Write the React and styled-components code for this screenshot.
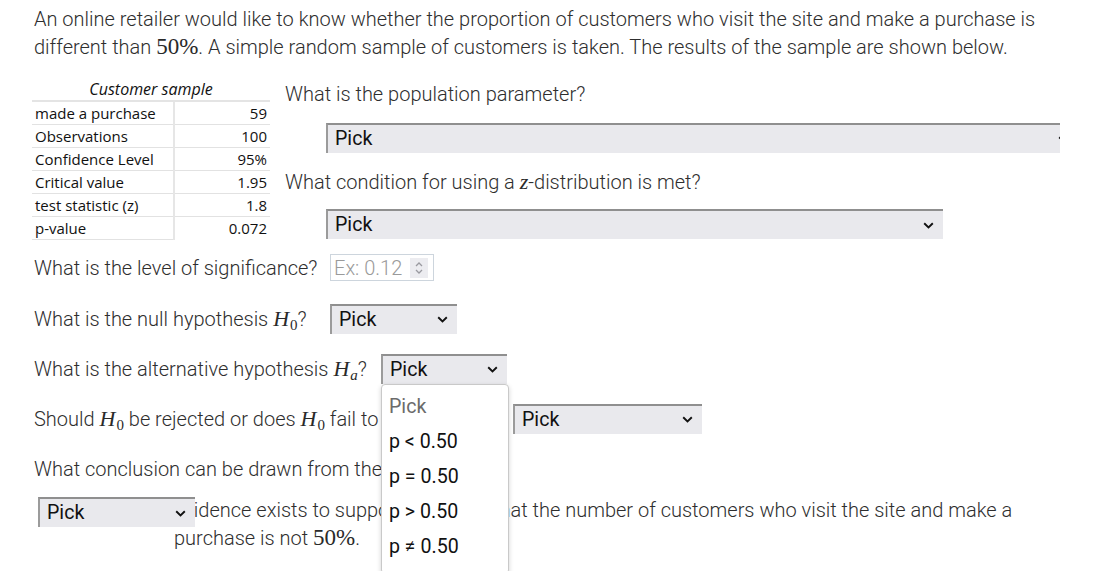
import React from "react";
import styled, { createGlobalStyle } from "styled-components";

const GlobalStyle = createGlobalStyle`
  html, body { margin: 0; padding: 0; background: #fff; }
  body {
    font-family: Roboto, "Noto Sans", sans-serif;
    font-size: 20px;
    font-weight: 300;
    color: #2e2e2e;
  }
`;

const Page = styled.div`
  position: relative;
  box-sizing: border-box;
  width: 1100px;
  height: 571px;
  overflow: hidden;
  padding: 5px 0 0 34px;
`;

const Intro = styled.p`
  margin: 0;
  max-width: 1040px;
  line-height: 28px;
`;

const MathText = styled.span`
  font-family: "Liberation Serif", "DejaVu Serif", serif;
  font-size: ${(p) => (p.$italic ? 22 : 23)}px;
  font-weight: 400;
  font-style: ${(p) => (p.$italic ? "italic" : "normal")};
  color: #2a2a2a;
`;

const Sub = styled.sub`
  font-size: 15px;
  font-style: ${(p) => (p.$italic ? "italic" : "normal")};
  vertical-align: -4px;
  line-height: 0;
  margin-left: 1px;
`;

const TopSection = styled.div`
  display: flex;
  align-items: flex-start;
  margin-top: 17px;
`;

const SampleTable = styled.table`
  border-collapse: collapse;
  width: 238px;
  margin-left: -2px;
  font-family: "Open Sans", "Noto Sans", sans-serif;
  font-size: 15px;
  font-weight: 400;
  color: #111;
  flex-shrink: 0;
`;

const HeadCell = styled.th`
  font-style: italic;
  font-size: 16px;
  font-weight: 400;
  text-align: center;
  height: 21px;
  padding: 0;
  border-bottom: 2px solid #e4e4e4;
`;

const LabelCell = styled.td`
  height: 22px;
  padding: 0 0 0 3px;
  width: 138px;
  border-bottom: 1px solid #e2e2e2;
  border-right: 2px solid #e6e6e6;
  white-space: nowrap;
`;

const ValueCell = styled.td`
  height: 22px;
  padding: 0 3px 0 0;
  text-align: right;
  border-bottom: ${(p) => (p.$last ? "none" : "1px solid #e2e2e2")};
`;

const RightCol = styled.div`
  margin-left: 15px;
  padding-top: 2px;
  display: flex;
  flex-direction: column;
  align-items: flex-start;
`;

const Question = styled.div`
  line-height: 28px;
  margin-top: ${(p) => p.$mt || 0}px;
  white-space: nowrap;
`;

const Clip = styled.div`
  width: ${(p) => p.$w}px;
  overflow: hidden;
  margin-top: ${(p) => p.$mt || 0}px;
  margin-left: ${(p) => p.$ml || 0}px;
`;

const SelectBox = styled.div`
  position: relative;
  box-sizing: border-box;
  width: ${(p) => p.$w}px;
  height: ${(p) => p.$h || 30}px;
  flex-shrink: 0;
  display: flex;
  align-items: center;
  justify-content: space-between;
  padding: 0 9px 0 7px;
  background: #e9e9ed;
  border-top: 2px solid #8f8f8f;
  border-left: 2px solid #9b9b9b;
  color: #111;
  font-size: 19.6px;
  font-weight: 400;
  line-height: 1;
  z-index: 1;
  margin-top: ${(p) => p.$mt || 0}px;
  margin-left: ${(p) => p.$ml || 0}px;
`;

const Chevron = () => (
  <svg width="11" height="7" viewBox="0 0 11 7" aria-hidden="true">
    <path d="M1.2 1.2 L5.5 5.4 L9.8 1.2" fill="none" stroke="#111" strokeWidth="1.9" />
  </svg>
);

const Select = ({ w, h, mt, ml, children }) => (
  <SelectBox $w={w} $h={h} $mt={mt} $ml={ml}>
    <span>Pick</span>
    <Chevron />
    {children}
  </SelectBox>
);

const Bottom = styled.div`
  display: flex;
  flex-direction: column;
  margin-top: 12px;
`;

const QRow = styled.div`
  display: flex;
  align-items: center;
  height: 31px;
  margin-bottom: ${(p) => p.$mb ?? 19}px;
  margin-top: ${(p) => p.$mt || 0}px;
  white-space: nowrap;
`;

const Label = styled.span`
  display: inline-block;
  width: ${(p) => p.$w}px;
  flex-shrink: 0;
  line-height: 28px;
`;

const NumberBox = styled.div`
  box-sizing: border-box;
  width: 104px;
  height: 27px;
  display: flex;
  align-items: center;
  padding: 0 5px 0 3px;
  border: 1px solid #cdd5dd;
  background: #fff;
`;

const NumberInput = styled.input`
  width: 72px;
  border: none;
  outline: none;
  padding: 0;
  font-family: Roboto, sans-serif;
  font-size: 20px;
  font-weight: 300;
  color: #333;
  background: transparent;
  &::placeholder { color: #9a9a9a; }
`;

const Spinner = styled.span`
  margin-left: auto;
  width: 18px;
  height: 20px;
  background: #ececf0;
  display: flex;
  align-items: center;
  justify-content: center;
`;

const Menu = styled.div`
  position: absolute;
  top: 100%;
  left: -2px;
  box-sizing: border-box;
  width: 128px;
  height: 190px;
  padding-top: 4px;
  background: #fff;
  border: 1px solid #c9c9c9;
  border-radius: 4px;
  box-shadow: 0 2px 5px rgba(0, 0, 0, 0.18);
  z-index: 20;
`;

const MenuItem = styled.div`
  height: 35px;
  line-height: 35px;
  padding-left: 7px;
  font-size: 19.6px;
  font-weight: 400;
  color: ${(p) => (p.$muted ? "#6b6b6b" : "#111")};
`;

const Conclusion = styled.div`
  line-height: 28px;
  margin-bottom: 14px;
  white-space: nowrap;
`;

const ConclusionRow = styled.div`
  display: flex;
  align-items: flex-start;
  margin-left: 4px;
`;

const ClaimText = styled.div`
  width: 860px;
  margin-left: -21px;
  line-height: 28px;
  margin-top: -1px;
`;

export default function App() {
  const rows = [
    ["made a purchase", "59"],
    ["Observations", "100"],
    ["Confidence Level", "95%"],
    ["Critical value", "1.95"],
    ["test statistic (z)", "1.8"],
    ["p-value", "0.072"],
  ];
  const H0 = (
    <MathText $italic>
      H<Sub>0</Sub>
    </MathText>
  );
  return (
    <>
      <GlobalStyle />
      <Page>
        <Intro>
          An online retailer would like to know whether the proportion of customers who visit
          the site and make a purchase is different than <MathText>50%</MathText>. A simple
          random sample of customers is taken. The results of the sample are shown below.
        </Intro>

        <TopSection>
          <SampleTable>
            <thead>
              <tr>
                <HeadCell colSpan={2}>Customer sample</HeadCell>
              </tr>
            </thead>
            <tbody>
              {rows.map(([k, v], i) => (
                <tr key={k}>
                  <LabelCell>{k}</LabelCell>
                  <ValueCell $last={i === rows.length - 1}>{v}</ValueCell>
                </tr>
              ))}
            </tbody>
          </SampleTable>

          <RightCol>
            <Question>What is the population parameter?</Question>
            <Clip $w={734} $mt={15} $ml={41}>
              <Select w={752} />
            </Clip>
            <Question $mt={15}>
              What condition for using a <MathText $italic>z</MathText>-distribution is met?
            </Question>
            <Select w={617} mt={13} ml={41} />
          </RightCol>
        </TopSection>

        <Bottom>
          <QRow>
            <Label $w={296}>What is the level of significance?</Label>
            <NumberBox>
              <NumberInput type="text" placeholder="Ex: 0.12" />
              <Spinner>
                <svg width="10" height="14" viewBox="0 0 10 14" aria-hidden="true">
                  <path d="M2 5 L5 2 L8 5 M2 9 L5 12 L8 9" fill="none" stroke="#9a9aa0" strokeWidth="1.3" />
                </svg>
              </Spinner>
            </NumberBox>
          </QRow>

          <QRow $mt={1}>
            <Label $w={296}>What is the null hypothesis {H0}?</Label>
            <Select w={127} />
          </QRow>

          <QRow>
            <Label $w={347}>
              What is the alternative hypothesis{" "}
              <MathText $italic>
                H<Sub $italic>a</Sub>
              </MathText>
              ?
            </Label>
            <Select w={126}>
              <Menu>
                <MenuItem $muted>Pick</MenuItem>
                <MenuItem>p &lt; 0.50</MenuItem>
                <MenuItem>p = 0.50</MenuItem>
                <MenuItem>p &gt; 0.50</MenuItem>
                <MenuItem>p ≠ 0.50</MenuItem>
              </Menu>
            </Select>
          </QRow>

          <QRow $mb={21}>
            <Label $w={479}>
              Should {H0} be rejected or does {H0} fail to be rejected?
            </Label>
            <Select w={189} />
          </QRow>

          <Conclusion>What conclusion can be drawn from the test?</Conclusion>

          <ConclusionRow>
            <Select w={157} />
            <ClaimText>
              evidence exists to support the claim that the number of customers who visit the
              site and make a purchase is not <MathText>50%</MathText>.
            </ClaimText>
          </ConclusionRow>
        </Bottom>
      </Page>
    </>
  );
}
